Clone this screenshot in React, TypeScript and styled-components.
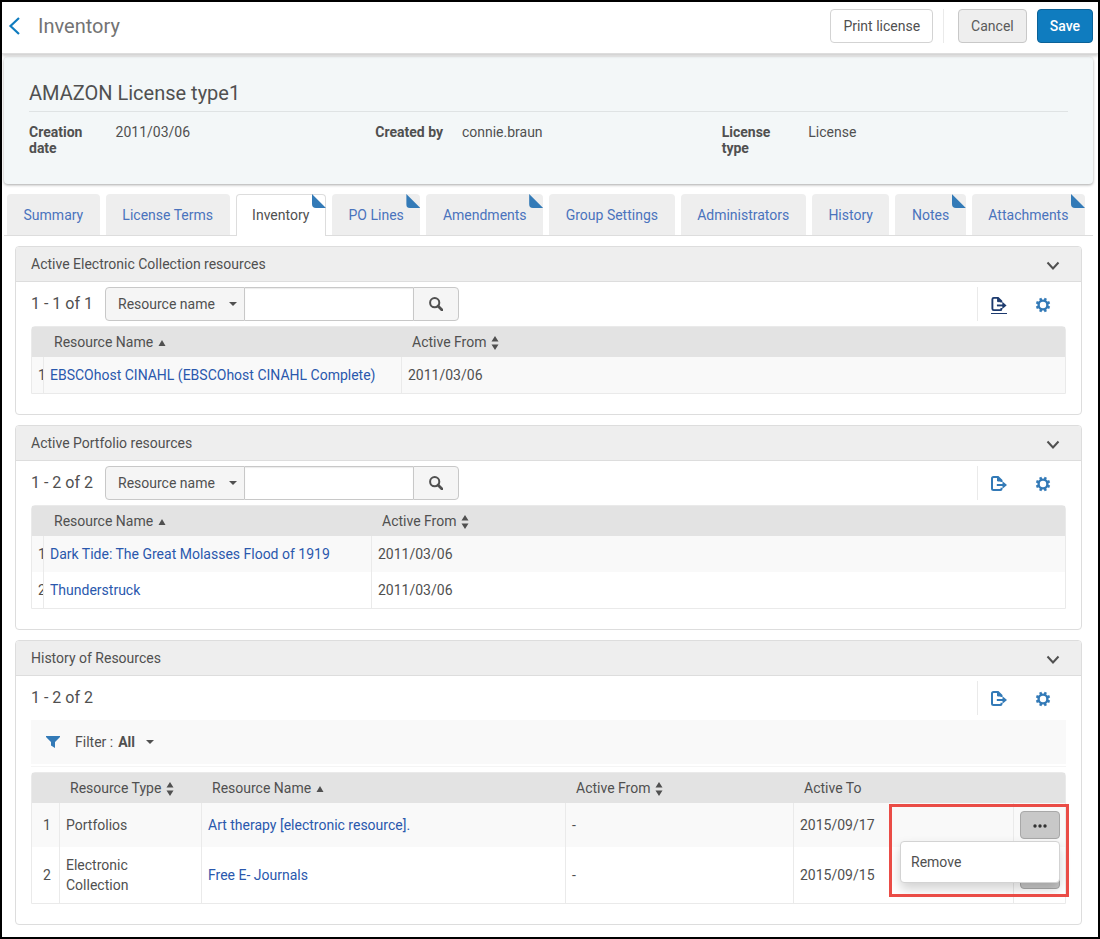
import React from "react";
import styled, { createGlobalStyle, css } from "styled-components";

const GlobalStyle = createGlobalStyle`
  *, *::before, *::after { box-sizing: border-box; }
  body {
    margin: 0;
    background: #fff;
    color: #505050;
    font-family: Roboto, "Liberation Sans", sans-serif;
    font-size: 14px;
    line-height: 20px;
  }
  button, input, select { font: inherit; color: inherit; }
  h1, h2, h3, dl, dd { margin: 0; font-weight: 400; }
`;

const Page = styled.div`
  min-height: 100vh;
  border: 2px solid #000;
`;

const Header = styled.header`
  position: relative;
  display: flex;
  align-items: center;
  gap: 10px;
  height: 52px;
  padding: 0 5px 3px 6px;
  background: #fff;
  border-bottom: 1px solid #ddd;
  box-shadow: 0 2px 3px rgba(0, 0, 0, 0.2);
`;

const BackLink = styled.a`
  display: flex;
  width: 20px;
  color: #0f7cbf;
`;

const PageTitle = styled.h1`
  flex: 1;
  font-size: 20px;
  line-height: 24px;
  color: #737373;
`;

const Button = styled.button<{ $kind?: "plain" | "grey" | "primary" }>`
  height: 34px;
  padding: 0 12px;
  border: 1px solid #d3d3d3;
  border-radius: 4px;
  background: #fff;
  ${(p) => p.$kind === "grey" && css`background: #eee; border-color: #c8c8c8; color: #5a5a5a;`}
  ${(p) => p.$kind === "primary" && css`background: #0f7cbf; border-color: #0b6298; color: #fff; font-weight: 500;`}
`;

const Divider = styled.span`
  width: 1px;
  height: 34px;
  margin-right: 4px;
  background: #eaeaea;
`;

const Summary = styled.section`
  min-height: 127px;
  margin: 3px 5px 0 2px;
  padding: 24px 25px 0;
  background: #f3f7f8;
  border-radius: 4px;
  box-shadow: 0 1px 3px rgba(0, 0, 0, 0.35);
`;

const SummaryTitle = styled.h2`
  padding-bottom: 6px;
  border-bottom: 1px solid #dfe3e4;
  font-size: 20px;
  line-height: 24px;
`;

const Facts = styled.dl`
  display: grid;
  grid-template-columns: repeat(3, 1fr);
  padding-top: 12px;
  line-height: 16px;
`;

const Fact = styled.div`
  display: grid;
  grid-template-columns: 1fr 3fr;
  dt { padding-right: 15px; font-weight: 700; }
`;

const Tabs = styled.nav`
  display: flex;
  gap: 6px;
  margin: 10px 5px 0 2px;
  padding: 0 8px 0 3px;
  border-bottom: 1px solid #ddd;
`;

const Tab = styled.a<{ $active?: boolean; $marked?: boolean }>`
  position: relative;
  flex: 1 0 auto;
  height: 41px;
  padding: 11px 16px 0;
  border-radius: 4px 4px 0 0;
  background: #eee;
  color: #4a73bd;
  text-align: center;
  text-decoration: none;
  white-space: nowrap;
  ${(p) => p.$active && css`
    height: 42px;
    margin-bottom: -1px;
    padding: 10px 15px 0;
    border: 1px solid #ddd;
    border-bottom: 0;
    background: #fff;
    color: #505050;
  `}
  ${(p) => p.$marked && css`
    &::after {
      content: "";
      position: absolute;
      top: 0;
      right: 0;
      width: 14px;
      height: 14px;
      border-radius: 0 0 0 4px;
      background: #337ab7;
      clip-path: polygon(0 0, 100% 100%, 0 100%);
    }
  `}
  ${(p) => p.$active && p.$marked && css`
    &::after { top: -1px; right: -1px; }
  `}
`;

const Sections = styled.main`
  display: grid;
  gap: 10px;
  padding: 10px 16px 12px 13px;
`;

const Panel = styled.section`
  min-width: 0;
  border: 1px solid #ddd;
  border-radius: 4px;
`;

const PanelHead = styled.div`
  display: flex;
  align-items: center;
  justify-content: space-between;
  height: 35px;
  padding: 0 20px 0 15px;
  background: #eee;
  border-bottom: 1px solid #ddd;
  border-radius: 3px 3px 0 0;
  h3 { font-size: 14px; }
`;

const PanelBody = styled.div`
  padding: 5px 15px 20px;
`;

const IconButton = styled.button<{ $current?: boolean }>`
  display: flex;
  align-items: center;
  justify-content: center;
  height: 24px;
  padding: 0;
  border: 0;
  background: none;
  color: #337ab7;
  ${(p) => p.$current && css`
    color: #1c3a6e;
    svg { border-bottom: 1px solid #1c3a6e; }
  `}
`;

const Collapse = styled(IconButton)`
  width: 16px;
  padding-top: 3px;
  color: #505050;
`;

const Toolbar = styled.div`
  display: flex;
  align-items: center;
  height: 34px;
`;

const Count = styled.span`
  min-width: 74px;
  font-size: 16px;
`;

const SearchGroup = styled.form`
  display: flex;
  height: 34px;
`;

const SelectWrap = styled.span`
  position: relative;
  display: flex;
  svg {
    position: absolute;
    right: 8px;
    top: 15px;
    pointer-events: none;
  }
`;

const FieldSelect = styled.select`
  appearance: none;
  width: 140px;
  padding: 0 24px 0 12px;
  border: 1px solid #c8c8c8;
  border-radius: 4px 0 0 4px;
  background: #f5f5f5;
`;

const SearchInput = styled.input`
  width: 168px;
  padding: 0 10px;
  border: solid #c8c8c8;
  border-width: 1px 0;
  background: #fff;
  box-shadow: inset 0 1px 1px rgba(0, 0, 0, 0.08);
`;

const SearchButton = styled.button`
  display: flex;
  align-items: center;
  justify-content: center;
  width: 46px;
  padding: 0;
  border: 1px solid #c8c8c8;
  border-radius: 0 4px 4px 0;
  background: #f5f5f5;
`;

const Tools = styled.div`
  display: flex;
  align-items: center;
  gap: 28px;
  height: 34px;
  margin-left: auto;
  padding: 2px 15px 0 13px;
  border-left: 1px solid #eaeaea;
`;

const FilterBar = styled.div`
  display: flex;
  align-items: center;
  height: 44px;
  margin-top: 5px;
  padding-left: 15px;
  background: #f9f9f9;
  svg:first-child { color: #337ab7; }
  label { margin: 0 5px 0 15px; }
`;

const FilterSelect = styled.select`
  appearance: none;
  width: 36px;
  padding: 0;
  border: 0;
  background: none;
  font-weight: 700;
`;

const FilterSelectWrap = styled(SelectWrap)`
  svg { top: 8px; right: 0; }
`;

const Rule = styled.div`
  height: 1px;
  margin: 2px 0 5px;
  background: #f5f5f5;
`;

const Table = styled.table<{ $spaced?: boolean }>`
  width: 100%;
  margin-top: ${(p) => (p.$spaced ? "5px" : "0")};
  table-layout: fixed;
  border: 1px solid #eaeaea;
  border-collapse: separate;
  border-spacing: 0;
  border-radius: 4px 4px 0 0;
`;

const Col = styled.col<{ $w?: number }>`
  width: ${(p) => (p.$w ? `${p.$w}px` : "auto")};
`;

const Th = styled.th`
  height: 30px;
  padding: 0 10px;
  background: #e3e3e3;
  font-weight: 400;
  text-align: left;
  white-space: nowrap;
  svg { margin-left: 5px; vertical-align: middle; }
`;

const Tr = styled.tr<{ $h: number }>`
  height: ${(p) => p.$h}px;
  &:nth-child(odd) { background: #f9f9f9; }
`;

const Td = styled.td`
  padding: 0 10px 0 6px;
  border-right: 1px solid #eaeaea;
  &:last-child { border-right: 0; }
`;

const NumberTd = styled(Td)<{ $wide?: boolean }>`
  padding: 0 0 0 ${(p) => (p.$wide ? "11px" : "6px")};
  overflow: hidden;
  white-space: nowrap;
`;

const NameLink = styled.a`
  color: #2a58ad;
  text-decoration: none;
`;

const Actions = styled.div`
  position: relative;
  width: 40px;
  height: 28px;
`;

const MoreButton = styled.button`
  display: flex;
  align-items: center;
  justify-content: center;
  width: 40px;
  height: 28px;
  padding: 2px 0 0;
  border: 1px solid #a8a8a8;
  border-radius: 4px;
  background: #c8c8c8;
`;

const Menu = styled.div`
  position: absolute;
  z-index: 2;
  top: 30px;
  right: 0;
  width: 160px;
  height: 42px;
  border: 1px solid #d3d3d3;
  border-radius: 4px;
  background: #fff;
  box-shadow: 0 6px 12px rgba(0, 0, 0, 0.18);
`;

const MenuItem = styled.button`
  width: 100%;
  height: 40px;
  padding: 0 10px;
  border: 0;
  background: none;
  text-align: left;
`;

const Highlight = styled.div`
  position: absolute;
  z-index: 3;
  top: -7px;
  right: -9px;
  width: 180px;
  height: 93px;
  border: 3px solid #ea4c46;
  pointer-events: none;
`;

const Chevron = () => (
  <svg width="14" height="10" viewBox="0 0 14 10" fill="none" stroke="currentColor" strokeWidth="2" aria-hidden="true">
    <path d="M1.500 1.500 7 7.500l5.500-6" />
  </svg>
);

const Caret = () => (
  <svg width="8" height="4" viewBox="0 0 8 4" fill="currentColor" aria-hidden="true">
    <path d="M0 0h8L4 4z" />
  </svg>
);

const SearchIcon = () => (
  <svg width="14" height="14" viewBox="0 0 14 14" fill="none" stroke="currentColor" aria-hidden="true">
    <circle cx="5.7" cy="5.7" r="4.6" strokeWidth="2" />
    <path d="m9 9 4 4" strokeWidth="2.8" strokeLinecap="round" />
  </svg>
);

const ExportIcon = () => (
  <svg width="16" height="18" viewBox="0 0 16 18" fill="none" stroke="currentColor" aria-hidden="true">
    <path d="M10.500 12.800V14q0 1-1 1H2.500Q1 15 1 13.500V3.500Q1 2 2.500 2H7l3.500 3.500V7" strokeWidth="2" />
    <path d="M6.500 2v4h4z" fill="currentColor" strokeWidth="1" />
    <path d="M5.800 10H13" strokeWidth="2" />
    <path d="M11.500 6.200 16 10l-4.500 3.800z" fill="currentColor" stroke="none" />
  </svg>
);

const GearIcon = () => (
  <svg width="16" height="16" viewBox="0 0 16 16" fill="none" stroke="currentColor" aria-hidden="true">
    <circle cx="8" cy="8" r="4.400" strokeWidth="2.400" />
    <g strokeWidth="2.500">
      {[22.5, 67.5, 112.5, 157.5, 202.5, 247.5, 292.5, 337.5].map((a) => (
        <path key={a} d="M8 3.500V.8" transform={`rotate(${a} 8 8)`} />
      ))}
    </g>
  </svg>
);

const FunnelIcon = () => (
  <svg width="14" height="12" viewBox="0 0 14 12" fill="currentColor" aria-hidden="true">
    <path d="M0 0h14v1L9 6v6L5 9.500V6L0 1z" />
  </svg>
);

const DotsIcon = () => (
  <svg width="14" height="4" viewBox="0 0 14 4" fill="#333" aria-hidden="true">
    <circle cx="2" cy="2" r="1.700" />
    <circle cx="7" cy="2" r="1.700" />
    <circle cx="12" cy="2" r="1.700" />
  </svg>
);

const SortIcon = ({ both }: { both?: boolean }) =>
  both ? (
    <svg width="8" height="14" viewBox="0 0 8 14" fill="currentColor" aria-hidden="true">
      <path d="M4 0l3.500 5.500h-7zM4 14l3.500-5.500h-7z" />
    </svg>
  ) : (
    <svg width="8" height="6" viewBox="0 0 8 6" fill="currentColor" aria-hidden="true">
      <path d="M4 0l3.500 6h-7z" />
    </svg>
  );

const tabs = [
  { label: "Summary" },
  { label: "License Terms" },
  { label: "Inventory", active: true, marked: true },
  { label: "PO Lines", marked: true },
  { label: "Amendments", marked: true },
  { label: "Group Settings" },
  { label: "Administrators" },
  { label: "History" },
  { label: "Notes", marked: true },
  { label: "Attachments", marked: true },
];

const facts = [
  ["Creation date", "2011/03/06"],
  ["Created by", "connie.braun"],
  ["License type", "License"],
];

function ListTools({ exportCurrent }: { exportCurrent?: boolean }) {
  return (
    <Tools>
      <IconButton type="button" aria-label="Export" $current={exportCurrent}><ExportIcon /></IconButton>
      <IconButton type="button" aria-label="Manage columns"><GearIcon /></IconButton>
    </Tools>
  );
}

function PanelHeader({ title }: { title: string }) {
  return (
    <PanelHead>
      <h3>{title}</h3>
      <Collapse type="button" aria-label={`Collapse ${title}`}><Chevron /></Collapse>
    </PanelHead>
  );
}

interface ResourcePanelProps {
  title: string;
  count: string;
  nameWidth: number;
  rows: [string, string][];
  exportCurrent?: boolean;
}

function ResourcePanel({ title, count, nameWidth, rows, exportCurrent }: ResourcePanelProps) {
  return (
    <Panel>
      <PanelHeader title={title} />
      <PanelBody>
        <Toolbar>
          <Count>{count}</Count>
          <SearchGroup role="search" onSubmit={(e) => e.preventDefault()}>
            <SelectWrap>
              <FieldSelect aria-label="Search field"><option>Resource name</option></FieldSelect>
              <Caret />
            </SelectWrap>
            <SearchInput type="text" aria-label="Search text" />
            <SearchButton type="submit" aria-label="Search"><SearchIcon /></SearchButton>
          </SearchGroup>
          <ListTools exportCurrent={exportCurrent} />
        </Toolbar>
        <Table $spaced>
          <colgroup><Col $w={12} /><Col $w={nameWidth} /><Col /></colgroup>
          <thead>
            <tr>
              <Th />
              <Th>Resource Name<SortIcon /></Th>
              <Th>Active From<SortIcon both /></Th>
            </tr>
          </thead>
          <tbody>
            {rows.map(([name, date], i) => (
              <Tr key={name} $h={36}>
                <NumberTd>{i + 1}</NumberTd>
                <Td><NameLink href="#">{name}</NameLink></Td>
                <Td>{date}</Td>
              </Tr>
            ))}
          </tbody>
        </Table>
      </PanelBody>
    </Panel>
  );
}

const history = [
  { type: "Portfolios", name: "Art therapy [electronic resource].", from: "-", to: "2015/09/17", height: 44, open: true },
  { type: "Electronic Collection", name: "Free E- Journals", from: "-", to: "2015/09/15", height: 56, open: false },
];

function HistoryPanel() {
  return (
    <Panel>
      <PanelHeader title="History of Resources" />
      <PanelBody>
        <Toolbar>
          <Count>1 - 2 of 2</Count>
          <ListTools />
        </Toolbar>
        <FilterBar>
          <FunnelIcon />
          <label htmlFor="history-filter">Filter :</label>
          <FilterSelectWrap>
            <FilterSelect id="history-filter"><option>All</option></FilterSelect>
            <Caret />
          </FilterSelectWrap>
        </FilterBar>
        <Rule />
        <Table>
          <colgroup>
            <Col $w={28} /><Col $w={142} /><Col /><Col $w={228} /><Col $w={220} /><Col $w={51} />
          </colgroup>
          <thead>
            <tr>
              <Th />
              <Th>Resource Type<SortIcon both /></Th>
              <Th>Resource Name<SortIcon /></Th>
              <Th>Active From<SortIcon both /></Th>
              <Th>Active To</Th>
              <Th />
            </tr>
          </thead>
          <tbody>
            {history.map((row, i) => (
              <Tr key={row.name} $h={row.height}>
                <NumberTd $wide>{i + 1}</NumberTd>
                <Td>{row.type}</Td>
                <Td><NameLink href="#">{row.name}</NameLink></Td>
                <Td>{row.from}</Td>
                <Td>{row.to}</Td>
                <Td>
                  <Actions>
                    <MoreButton type="button" aria-label="Row actions"><DotsIcon /></MoreButton>
                    {row.open && (
                      <>
                        <Menu role="menu"><MenuItem type="button" role="menuitem">Remove</MenuItem></Menu>
                        <Highlight />
                      </>
                    )}
                  </Actions>
                </Td>
              </Tr>
            ))}
          </tbody>
        </Table>
      </PanelBody>
    </Panel>
  );
}

export default function App() {
  return (
    <Page>
      <GlobalStyle />
      <Header>
        <BackLink href="#" aria-label="Back">
          <svg width="12" height="18" viewBox="0 0 12 18" fill="none" stroke="currentColor" strokeWidth="2.200" aria-hidden="true">
            <path d="M11 1 2.500 9l8.500 8" />
          </svg>
        </BackLink>
        <PageTitle>Inventory</PageTitle>
        <Button type="button">Print license</Button>
        <Divider />
        <Button type="button" $kind="grey">Cancel</Button>
        <Button type="button" $kind="primary">Save</Button>
      </Header>
      <Summary>
        <SummaryTitle>AMAZON License type1</SummaryTitle>
        <Facts>
          {facts.map(([label, value]) => (
            <Fact key={label}><dt>{label}</dt><dd>{value}</dd></Fact>
          ))}
        </Facts>
      </Summary>
      <Tabs>
        {tabs.map((t) => (
          <Tab key={t.label} href="#" $active={t.active} $marked={t.marked} aria-current={t.active ? "page" : undefined}>
            {t.label}
          </Tab>
        ))}
      </Tabs>
      <Sections>
        <ResourcePanel
          title="Active Electronic Collection resources"
          count="1 - 1 of 1"
          nameWidth={358}
          rows={[["EBSCOhost CINAHL (EBSCOhost CINAHL Complete)", "2011/03/06"]]}
          exportCurrent
        />
        <ResourcePanel
          title="Active Portfolio resources"
          count="1 - 2 of 2"
          nameWidth={328}
          rows={[
            ["Dark Tide: The Great Molasses Flood of 1919", "2011/03/06"],
            ["Thunderstruck", "2011/03/06"],
          ]}
        />
        <HistoryPanel />
      </Sections>
    </Page>
  );
}
